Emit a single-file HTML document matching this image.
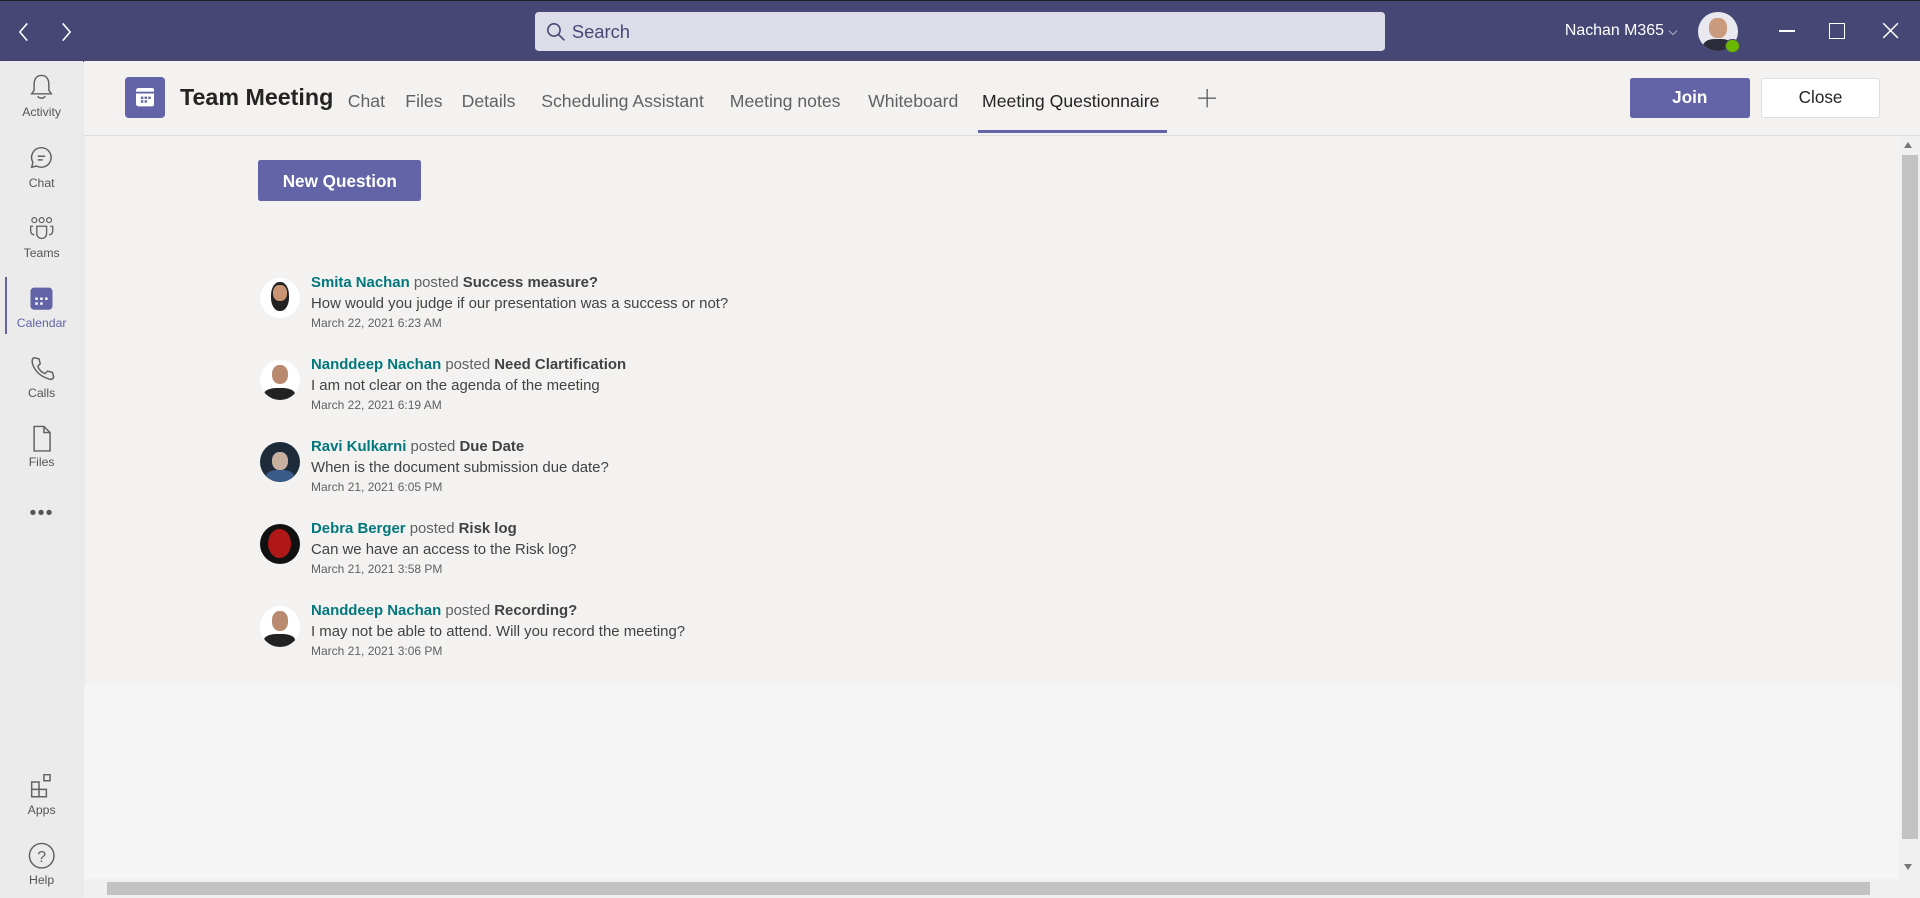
<!DOCTYPE html>
<html><head><meta charset="utf-8"><style>
html,body{margin:0;padding:0;overflow:hidden;background:#f3f2f1}
body{width:1568px;height:733px;zoom:1.2244898;font-family:"Segoe UI","Liberation Sans",sans-serif;position:relative}
.top{position:absolute;left:0;top:0;width:1568px;height:50px;background:#464775;border-top:1px solid #222}
.search{position:absolute;left:437px;top:9px;width:694px;height:32px;background:#dcdde8;border-radius:3px}
.search span{position:absolute;left:30px;top:7px;font-size:15px;color:#464775}
.rail{position:absolute;left:0;top:50px;width:68px;height:683px;background:#ebebeb;box-shadow:1px 0 3px rgba(0,0,0,.08)}
.ri{position:absolute;left:0;width:68px;text-align:center;font-size:10px;color:#555}
.ri svg{display:block;margin:0 auto 2px}
.hdr{position:absolute;left:69px;top:50px;width:1499px;height:60px;border-bottom:1px solid #ddd;background:#f3f2f1}
.tab{position:absolute;top:24px;font-size:14.4px;color:#616161}
.q{position:absolute;left:212px}
.av{position:absolute;left:0;top:0;width:33px;height:33px;border-radius:50%;overflow:hidden;background:#fff}
.t1{position:absolute;left:42px;top:-3px;font-size:12.2px;color:#616161;white-space:nowrap}
.t1 b.n{color:#03787c}.t1 b.s{color:#424242}
.t2{position:absolute;left:42px;top:14px;font-size:12.2px;color:#424242;white-space:nowrap}
.t3{position:absolute;left:42px;top:31px;font-size:9.8px;color:#616161;white-space:nowrap}
</style></head><body>
<div class="top">
<svg style="position:absolute;left:12px;top:16px" width="50" height="18"><path d="M10 2L4 9l6 7M39 2l6 7-6 7" stroke="#fff" stroke-width="1.3" fill="none"/></svg>
<div class="search"><svg style="position:absolute;left:9px;top:8px" width="16" height="16"><circle cx="6.5" cy="6.5" r="5" stroke="#464775" stroke-width="1.3" fill="none"/><path d="M10 10l5 5" stroke="#464775" stroke-width="1.3"/></svg><span>Search</span></div>
<div style="position:absolute;left:1278px;top:17px;color:#fff;font-size:13px">Nachan M365 <span style="font-size:10px">⌵</span></div>
<div style="position:absolute;left:1387px;top:9px;width:32px;height:32px;border-radius:50%;background:#e8e8ee;overflow:hidden"><div style="position:absolute;left:9px;top:5px;width:14px;height:16px;border-radius:45%;background:#c99a7e"></div><div style="position:absolute;left:4px;top:22px;width:24px;height:14px;border-radius:40%;background:#2b2b3a"></div></div>
<div style="position:absolute;left:1409px;top:31px;width:10px;height:10px;border-radius:50%;background:#6bb700;border:1px solid #464775"></div>
<div style="position:absolute;left:1453px;top:24px;width:13px;height:1px;background:#fff"></div>
<div style="position:absolute;left:1494px;top:18px;width:11px;height:11px;border:1px solid #fff"></div>
<svg style="position:absolute;left:1537px;top:17px" width="14" height="14"><path d="M1 1l12 12M13 1L1 13" stroke="#fff" stroke-width="1.2"/></svg>
</div>
<div class="rail">
<div class="ri" style="top:10px"><svg width="22" height="24"><path d="M11 2c-4 0-6 3-6 7v5l-2 3h16l-2-3V9c0-4-2-7-6-7zM8 19c1 2 5 2 6 0" stroke="#616161" stroke-width="1.2" fill="none"/></svg>Activity</div>
<div class="ri" style="top:68px"><svg width="22" height="24"><path d="M11 3a8 8 0 1 1-4 15l-4 1 1-4A8 8 0 0 1 11 3zM8 10h6M8 13h4" stroke="#616161" stroke-width="1.2" fill="none"/></svg>Chat</div>
<div class="ri" style="top:125px"><svg width="24" height="24"><circle cx="6" cy="5" r="2" stroke="#616161" fill="none"/><circle cx="12" cy="5" r="2" stroke="#616161" fill="none"/><circle cx="18" cy="5" r="2" stroke="#616161" fill="none"/><path d="M8 10h8v6a4 4 0 0 1-8 0zM5 10H3v4a3 3 0 0 0 3 3M19 10h2v4a3 3 0 0 1-3 3" stroke="#616161" stroke-width="1.1" fill="none"/></svg>Teams</div>
<div style="position:absolute;left:4px;top:176px;width:2px;height:47px;background:#6264a7"></div>
<div class="ri" style="top:182px;color:#6264a7"><svg width="22" height="24"><rect x="2" y="3" width="18" height="18" rx="3" fill="#6264a7"/><g fill="#fff"><rect x="6" y="11" width="2" height="2"/><rect x="10" y="11" width="2" height="2"/><rect x="14" y="11" width="2" height="2"/><rect x="6" y="15" width="2" height="2"/><rect x="10" y="15" width="2" height="2"/></g></svg>Calendar</div>
<div class="ri" style="top:239px"><svg width="22" height="24"><path d="M5 3l4 1 1 4-2 2c1 3 3 5 6 6l2-2 4 1 1 4c-1 2-3 2-5 1C10 18 6 14 4 9 3 6 3 4 5 3z" stroke="#616161" stroke-width="1.2" fill="none"/></svg>Calls</div>
<div class="ri" style="top:296px"><svg width="22" height="24"><path d="M5 2h8l5 5v15H5zM13 2v5h5" stroke="#616161" stroke-width="1.2" fill="none"/></svg>Files</div>
<div class="ri" style="top:360px;font-size:16px;letter-spacing:1px">•••</div>
<div class="ri" style="top:580px"><svg width="22" height="24"><path d="M3 9h6v6H3zM3 15h6v6H3zM9 15h6v6H9zM13 3l5 0 0 5-5 0z" stroke="#616161" stroke-width="1.2" fill="none"/></svg>Apps</div>
<div class="ri" style="top:637px"><svg width="24" height="24"><circle cx="12" cy="12" r="10" stroke="#616161" stroke-width="1.2" fill="none"/><text x="12" y="17" font-size="13" text-anchor="middle" fill="#616161" font-family="Liberation Sans">?</text></svg>Help</div>
</div>
<div class="hdr">
<div style="position:absolute;left:33px;top:13px;width:33px;height:33px;border-radius:3px;background:#6264a7"><svg style="position:absolute;left:9px;top:9px" width="15" height="15"><rect x="0" y="0" width="15" height="15" rx="2" fill="#fff"/><rect x="0" y="3" width="15" height="1.5" fill="#6264a7"/><g fill="#6264a7"><rect x="4" y="7" width="2" height="2"/><rect x="7" y="7" width="2" height="2"/><rect x="10" y="7" width="2" height="2"/><rect x="4" y="10" width="2" height="2"/><rect x="7" y="10" width="2" height="2"/></g></svg></div>
<div style="position:absolute;left:78px;top:19px;font-size:19px;font-weight:bold;color:#252423">Team Meeting</div>
<div class="tab" style="left:215px">Chat</div>
<div class="tab" style="left:262px">Files</div>
<div class="tab" style="left:308px">Details</div>
<div class="tab" style="left:373px">Scheduling Assistant</div>
<div class="tab" style="left:527px">Meeting notes</div>
<div class="tab" style="left:640px">Whiteboard</div>
<div class="tab" style="left:733px;color:#252423">Meeting Questionnaire</div>
<div style="position:absolute;left:730px;top:56px;width:154px;height:3px;background:#6264a7"></div>
<svg style="position:absolute;left:909px;top:23px" width="15" height="15"><path d="M7.5 0v15M0 7.5h15" stroke="#616161" stroke-width="1.1"/></svg>
<div style="position:absolute;left:1262px;top:14px;width:98px;height:32px;background:#6264a7;border-radius:2px;color:#fff;font-size:14px;font-weight:bold;text-align:center;line-height:32px">Join</div>
<div style="position:absolute;left:1369px;top:14px;width:96px;height:31px;background:#fff;border:1px solid #e1dfdd;border-radius:2px;color:#252423;font-size:14px;text-align:center;line-height:31px">Close</div>
</div>
<div style="position:absolute;left:211px;top:131px;width:133px;height:33px;background:#6264a7;border-radius:2px;color:#fff;font-size:14px;font-weight:bold;text-align:center;line-height:35px">New Question</div>

<div class="q" style="top:227px"><div class="av"><div style="position:absolute;left:9px;top:3px;width:15px;height:24px;border-radius:45%;background:#222"></div><div style="position:absolute;left:11px;top:6px;width:11px;height:13px;border-radius:45%;background:#c89474"></div></div>
<div class="t1"><b class="n">Smita Nachan</b> posted <b class="s">Success measure?</b></div><div class="t2">How would you judge if our presentation was a success or not?</div><div class="t3">March 22, 2021 6:23 AM</div></div>

<div class="q" style="top:294px"><div class="av"><div style="position:absolute;left:10px;top:4px;width:13px;height:16px;border-radius:45%;background:#b98a70"></div><div style="position:absolute;left:4px;top:23px;width:25px;height:12px;border-radius:40%;background:#222"></div></div>
<div class="t1"><b class="n">Nanddeep Nachan</b> posted <b class="s">Need Clartification</b></div><div class="t2">I am not clear on the agenda of the meeting</div><div class="t3">March 22, 2021 6:19 AM</div></div>

<div class="q" style="top:361px"><div class="av" style="background:#1c2a3a"><div style="position:absolute;left:10px;top:8px;width:13px;height:15px;border-radius:45%;background:#c8b0a0"></div><div style="position:absolute;left:5px;top:23px;width:23px;height:12px;border-radius:40%;background:#3a5a8a"></div></div>
<div class="t1"><b class="n">Ravi Kulkarni</b> posted <b class="s">Due Date</b></div><div class="t2">When is the document submission due date?</div><div class="t3">March 21, 2021 6:05 PM</div></div>

<div class="q" style="top:428px"><div class="av" style="background:#111"><div style="position:absolute;left:7px;top:4px;width:19px;height:24px;border-radius:50%;background:#b01818"></div></div>
<div class="t1"><b class="n">Debra Berger</b> posted <b class="s">Risk log</b></div><div class="t2">Can we have an access to the Risk log?</div><div class="t3">March 21, 2021 3:58 PM</div></div>

<div class="q" style="top:495px"><div class="av"><div style="position:absolute;left:10px;top:4px;width:13px;height:16px;border-radius:45%;background:#b98a70"></div><div style="position:absolute;left:4px;top:23px;width:25px;height:12px;border-radius:40%;background:#222"></div></div>
<div class="t1"><b class="n">Nanddeep Nachan</b> posted <b class="s">Recording?</b></div><div class="t2">I may not be able to attend. Will you record the meeting?</div><div class="t3">March 21, 2021 3:06 PM</div></div>

<div style="position:absolute;left:69px;top:560px;width:1482px;height:158px;background:#f5f5f5"></div>
<div style="position:absolute;left:1551px;top:111px;width:17px;height:607px;background:#f0f0f0"><div style="position:absolute;left:4px;top:5px;width:0;height:0;border-left:4px solid transparent;border-right:4px solid transparent;border-bottom:5px solid #777"></div><div style="position:absolute;left:2px;top:16px;width:13px;height:558px;background:#c2c2c2"></div><div style="position:absolute;left:4px;top:595px;width:0;height:0;border-left:4px solid transparent;border-right:4px solid transparent;border-top:5px solid #777"></div></div>
<div style="position:absolute;left:69px;top:718px;width:1499px;height:15px;background:#f0f0f0"><div style="position:absolute;left:18px;top:2px;width:1440px;height:11px;background:#c2c2c2"></div></div>
</body></html>
